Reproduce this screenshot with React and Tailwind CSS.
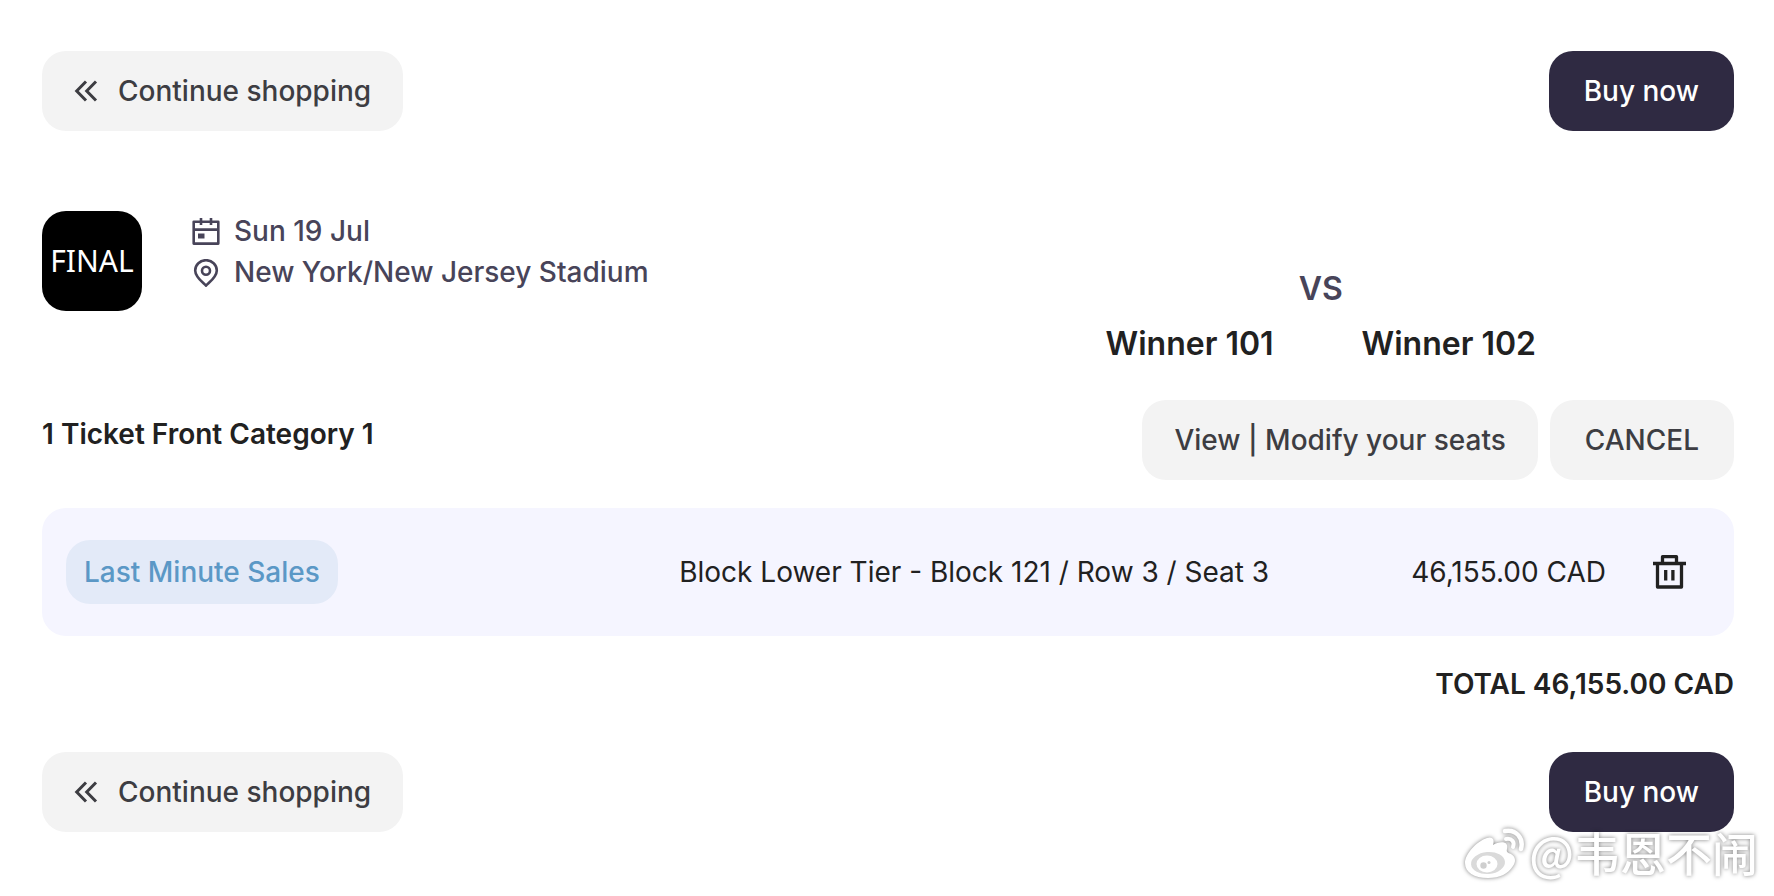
const tickets = [
    {
        id: 1,
        badge: "Last Minute Sales",
        seat: "Block Lower Tier - Block 121 / Row 3 / Seat 3",
        price: "46,155.00 CAD",
    },
];

function ChevronsIcon() {
    return (
        <svg className="h-6 w-6" viewBox="0 0 24 24" fill="none" stroke="currentColor" strokeWidth="3" aria-hidden="true">
            <path d="M12 2.5L2.7 12L12 21.5M22 2.5L12.7 12L22 21.5" />
        </svg>
    );
}

function CalendarIcon() {
    return (
        <svg className="h-7 w-7" viewBox="0 0 28 28" fill="none" stroke="currentColor" strokeWidth="2.6" strokeLinejoin="round" aria-hidden="true">
            <path d="M1.7 3.7H26.3V25.6H1.7ZM1.7 11.6H26.3M9 0V7M19 0V7" />
            <path d="M6 15.5H12.5V20.5H6Z" fill="currentColor" stroke="none" />
        </svg>
    );
}

function PinIcon() {
    return (
        <svg className="h-7 w-7" viewBox="0 0 28 28" fill="none" stroke="currentColor" strokeWidth="2.6" aria-hidden="true">
            <path d="M14 26.6C10.5 23 3.2 18 3.2 11.4A10.8 10.2 0 0 1 24.8 11.4C24.8 18 17.5 23 14 26.6Z" />
            <circle cx="14" cy="11.8" r="4" />
        </svg>
    );
}

function TrashIcon() {
    return (
        <svg className="h-9 w-9" viewBox="0 0 36 36" fill="none" stroke="currentColor" strokeWidth="3.3" strokeLinejoin="round" aria-hidden="true">
            <path d="M1 9.5H34M10.5 9V2.7H24.5V9M5.5 10V33H29.5V10" />
            <path d="M13.7 16V26.5M20.9 16V26.5" />
        </svg>
    );
}

function WeiboIcon() {
    return (
        <svg className="h-14 w-16" viewBox="0 0 64 56" fill="none" aria-hidden="true">
            <path
                d="M24 10C29 8 32 11 30 17C37 13 46 13 44 21C43 24 45 25 48 26C53 29 53 34 50 38C45 46 37 50 25 50C11 50 2 44 2 35C2 26 14 13 24 10Z"
                fill="white"
            />
            <ellipse cx="25" cy="35" rx="17" ry="11" fill="#dadada" transform="rotate(-5 25 35)" />
            <ellipse cx="24" cy="36" rx="10.5" ry="8.5" fill="white" />
            <circle cx="20.5" cy="37.5" r="3.2" fill="#cfcfcf" />
            <circle cx="26" cy="34.5" r="1.5" fill="#cfcfcf" />
            <path d="M42 3C53 1 61 10 58 21" stroke="white" strokeWidth="4.5" strokeLinecap="round" />
            <path d="M43 11C49 10 52 14 50 19" stroke="white" strokeWidth="4" strokeLinecap="round" />
        </svg>
    );
}

function CartActions() {
    return (
        <div className="flex items-center justify-between">
            <button type="button" className="flex h-20 items-center gap-5 rounded-3xl bg-[#f3f3f3] px-8 font-medium text-[#3d3d42]">
                <ChevronsIcon />
                Continue shopping
            </button>
            <button type="button" className="h-20 rounded-3xl bg-[#2f2a42] px-[35px] font-medium text-white">
                Buy now
            </button>
        </div>
    );
}

function MatchHeader() {
    return (
        <section className="mt-20 flex items-start">
            <div className="flex h-25 w-25 shrink-0 items-center justify-center rounded-3xl bg-black font-['Noto_Sans',sans-serif] text-[30px] text-white">
                FINAL
            </div>
            <div className="ml-[50px] flex-1 font-medium leading-[41px] text-[#484459]">
                <p className="flex items-center gap-[14px]">
                    <CalendarIcon />
                    Sun 19 Jul
                </p>
                <p className="flex items-center gap-[14px]">
                    <PinIcon />
                    New York/New Jersey Stadium
                </p>
            </div>
            <div className="mr-[198px] pt-14 text-center text-[32px] font-semibold">
                <p className="leading-[44px] text-[#484459]">VS</p>
                <div className="mt-[11px] flex gap-[88px] leading-[44px]">
                    <p>Winner 101</p>
                    <p>Winner 102</p>
                </div>
            </div>
        </section>
    );
}

function TicketRow({ ticket }) {
    return (
        <li className="flex h-32 items-center rounded-3xl bg-[#f5f5ff] pl-6 pr-[46px]">
            <span className="mr-auto flex h-16 items-center rounded-3xl bg-[#e3eaf8] px-[18px] font-medium text-[#5b98c6]">{ticket.badge}</span>
            <p>{ticket.seat}</p>
            <p className="ml-[142px] mr-[46px]">{ticket.price}</p>
            <button type="button" aria-label="Remove ticket">
                <TrashIcon />
            </button>
        </li>
    );
}

export default function App() {
    return (
        <div className="relative min-h-screen bg-white pb-16 pl-[42px] pr-10 pt-[51px] font-['Inter',sans-serif] text-[28px] leading-10 text-[#212121]">
            <CartActions />
            <MatchHeader />

            <section className="mt-[34px]">
                <div className="flex items-start justify-between">
                    <h2 className="pt-[14px] font-semibold">1 Ticket Front Category 1</h2>
                    <div className="flex gap-3 font-medium text-[#3d3d42]">
                        <button type="button" className="h-20 rounded-3xl bg-[#f3f3f3] px-8">
                            View | Modify your seats
                        </button>
                        <button type="button" className="h-20 rounded-3xl bg-[#f3f3f3] px-[35px]">
                            CANCEL
                        </button>
                    </div>
                </div>
                <ul className="mt-7">
                    {tickets.map((ticket) => (
                        <TicketRow ticket={ticket} key={ticket.id} />
                    ))}
                </ul>
                <p className="mb-12 mt-7 text-right font-semibold">TOTAL 46,155.00 CAD</p>
            </section>

            <CartActions />

            <div className="absolute bottom-3 right-4 flex items-start gap-[2px] font-['Noto_Sans_CJK_SC',sans-serif] text-[46px] font-medium leading-[46px] text-white drop-shadow-[0_0_2px_#00000080]">
                <WeiboIcon />
                <span>@韦恩不闹</span>
            </div>
        </div>
    );
}
